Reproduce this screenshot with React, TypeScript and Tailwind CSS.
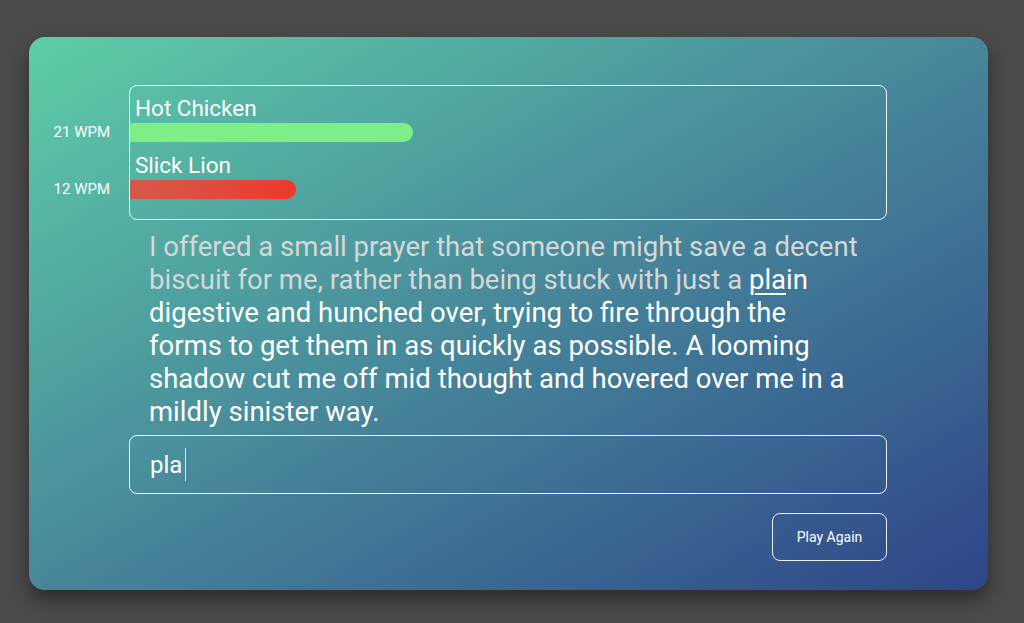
const racers = [
  { name: "Hot Chicken", wpm: 21, width: 283, bar: "bg-[#7def89]" },
  { name: "Slick Lion", wpm: 12, width: 166, bar: "bg-gradient-to-r from-[#d4584b] to-[#ee372b]" },
];

const typedLines = [
  "I offered a small prayer that someone might save a decent",
  "biscuit for me, rather than being stuck with just a ",
];

const restLines = [
  "digestive and hunched over, trying to fire through the",
  "forms to get them in as quickly as possible. A looming",
  "shadow cut me off mid thought and hovered over me in a",
  "mildly sinister way.",
];

const App = () => {
  return (
    <div
      className="min-h-[623px] bg-[#4a4a4a] pt-[37px] pl-[29px]"
      style={{ fontFamily: "Roboto, 'Noto Sans', sans-serif" }}
    >
      <div className="flex h-[553px] w-[959px] flex-col rounded-[16px] bg-gradient-to-br from-[#5ecea6] via-[#47879a] to-[#2f4488] pt-[48px] text-white shadow-[0_10px_18px_rgba(0,0,0,0.4)]">
        {/* race */}
        <div className="flex">
          <div className="flex w-[100px] flex-col gap-[39px] pt-[38px] pr-[19px] text-right text-[15px] leading-[18px]">
            {racers.map((r) => (
              <div key={r.name}>{r.wpm} WPM</div>
            ))}
          </div>
          <div className="flex w-[758px] flex-col gap-[10px] rounded-lg border border-white/90 pt-[9px] pb-[20px]">
            {racers.map((r) => (
              <div key={r.name} className="flex flex-col gap-[2px]">
                <div className="pl-[5px] text-[22.5px] leading-[26px]">{r.name}</div>
                <div className={`h-[19px] rounded-r-full ${r.bar}`} style={{ width: r.width }} />
              </div>
            ))}
          </div>
        </div>

        {/* passage */}
        <div className="ml-[100px] w-[758px] px-[20px] pt-[10px] text-[27.5px] leading-[33px]">
          <div className="whitespace-nowrap text-[#d6d8d8]">{typedLines[0]}</div>
          <div className="whitespace-nowrap">
            <span className="text-[#d6d8d8]">{typedLines[1]}</span>
            <span className="underline decoration-[1.5px] underline-offset-[4px]">pla</span>
            <span>in</span>
          </div>
          {restLines.map((l) => (
            <div key={l} className="whitespace-nowrap">
              {l}
            </div>
          ))}
        </div>

        {/* input */}
        <div className="ml-[100px] mt-[7px] flex h-[59px] w-[758px] items-center rounded-lg border border-white/90 px-[20px] text-[24px]">
          <span>pla</span>
          <span className="ml-[3px] h-[33px] w-px bg-white/80" />
        </div>

        <div className="ml-[100px] mt-[19px] flex w-[758px] justify-end">
          <button className="h-[48px] w-[115px] rounded-lg border border-white/90 text-[14px] text-white">
            Play Again
          </button>
        </div>
      </div>
    </div>
  );
};

export default App;
